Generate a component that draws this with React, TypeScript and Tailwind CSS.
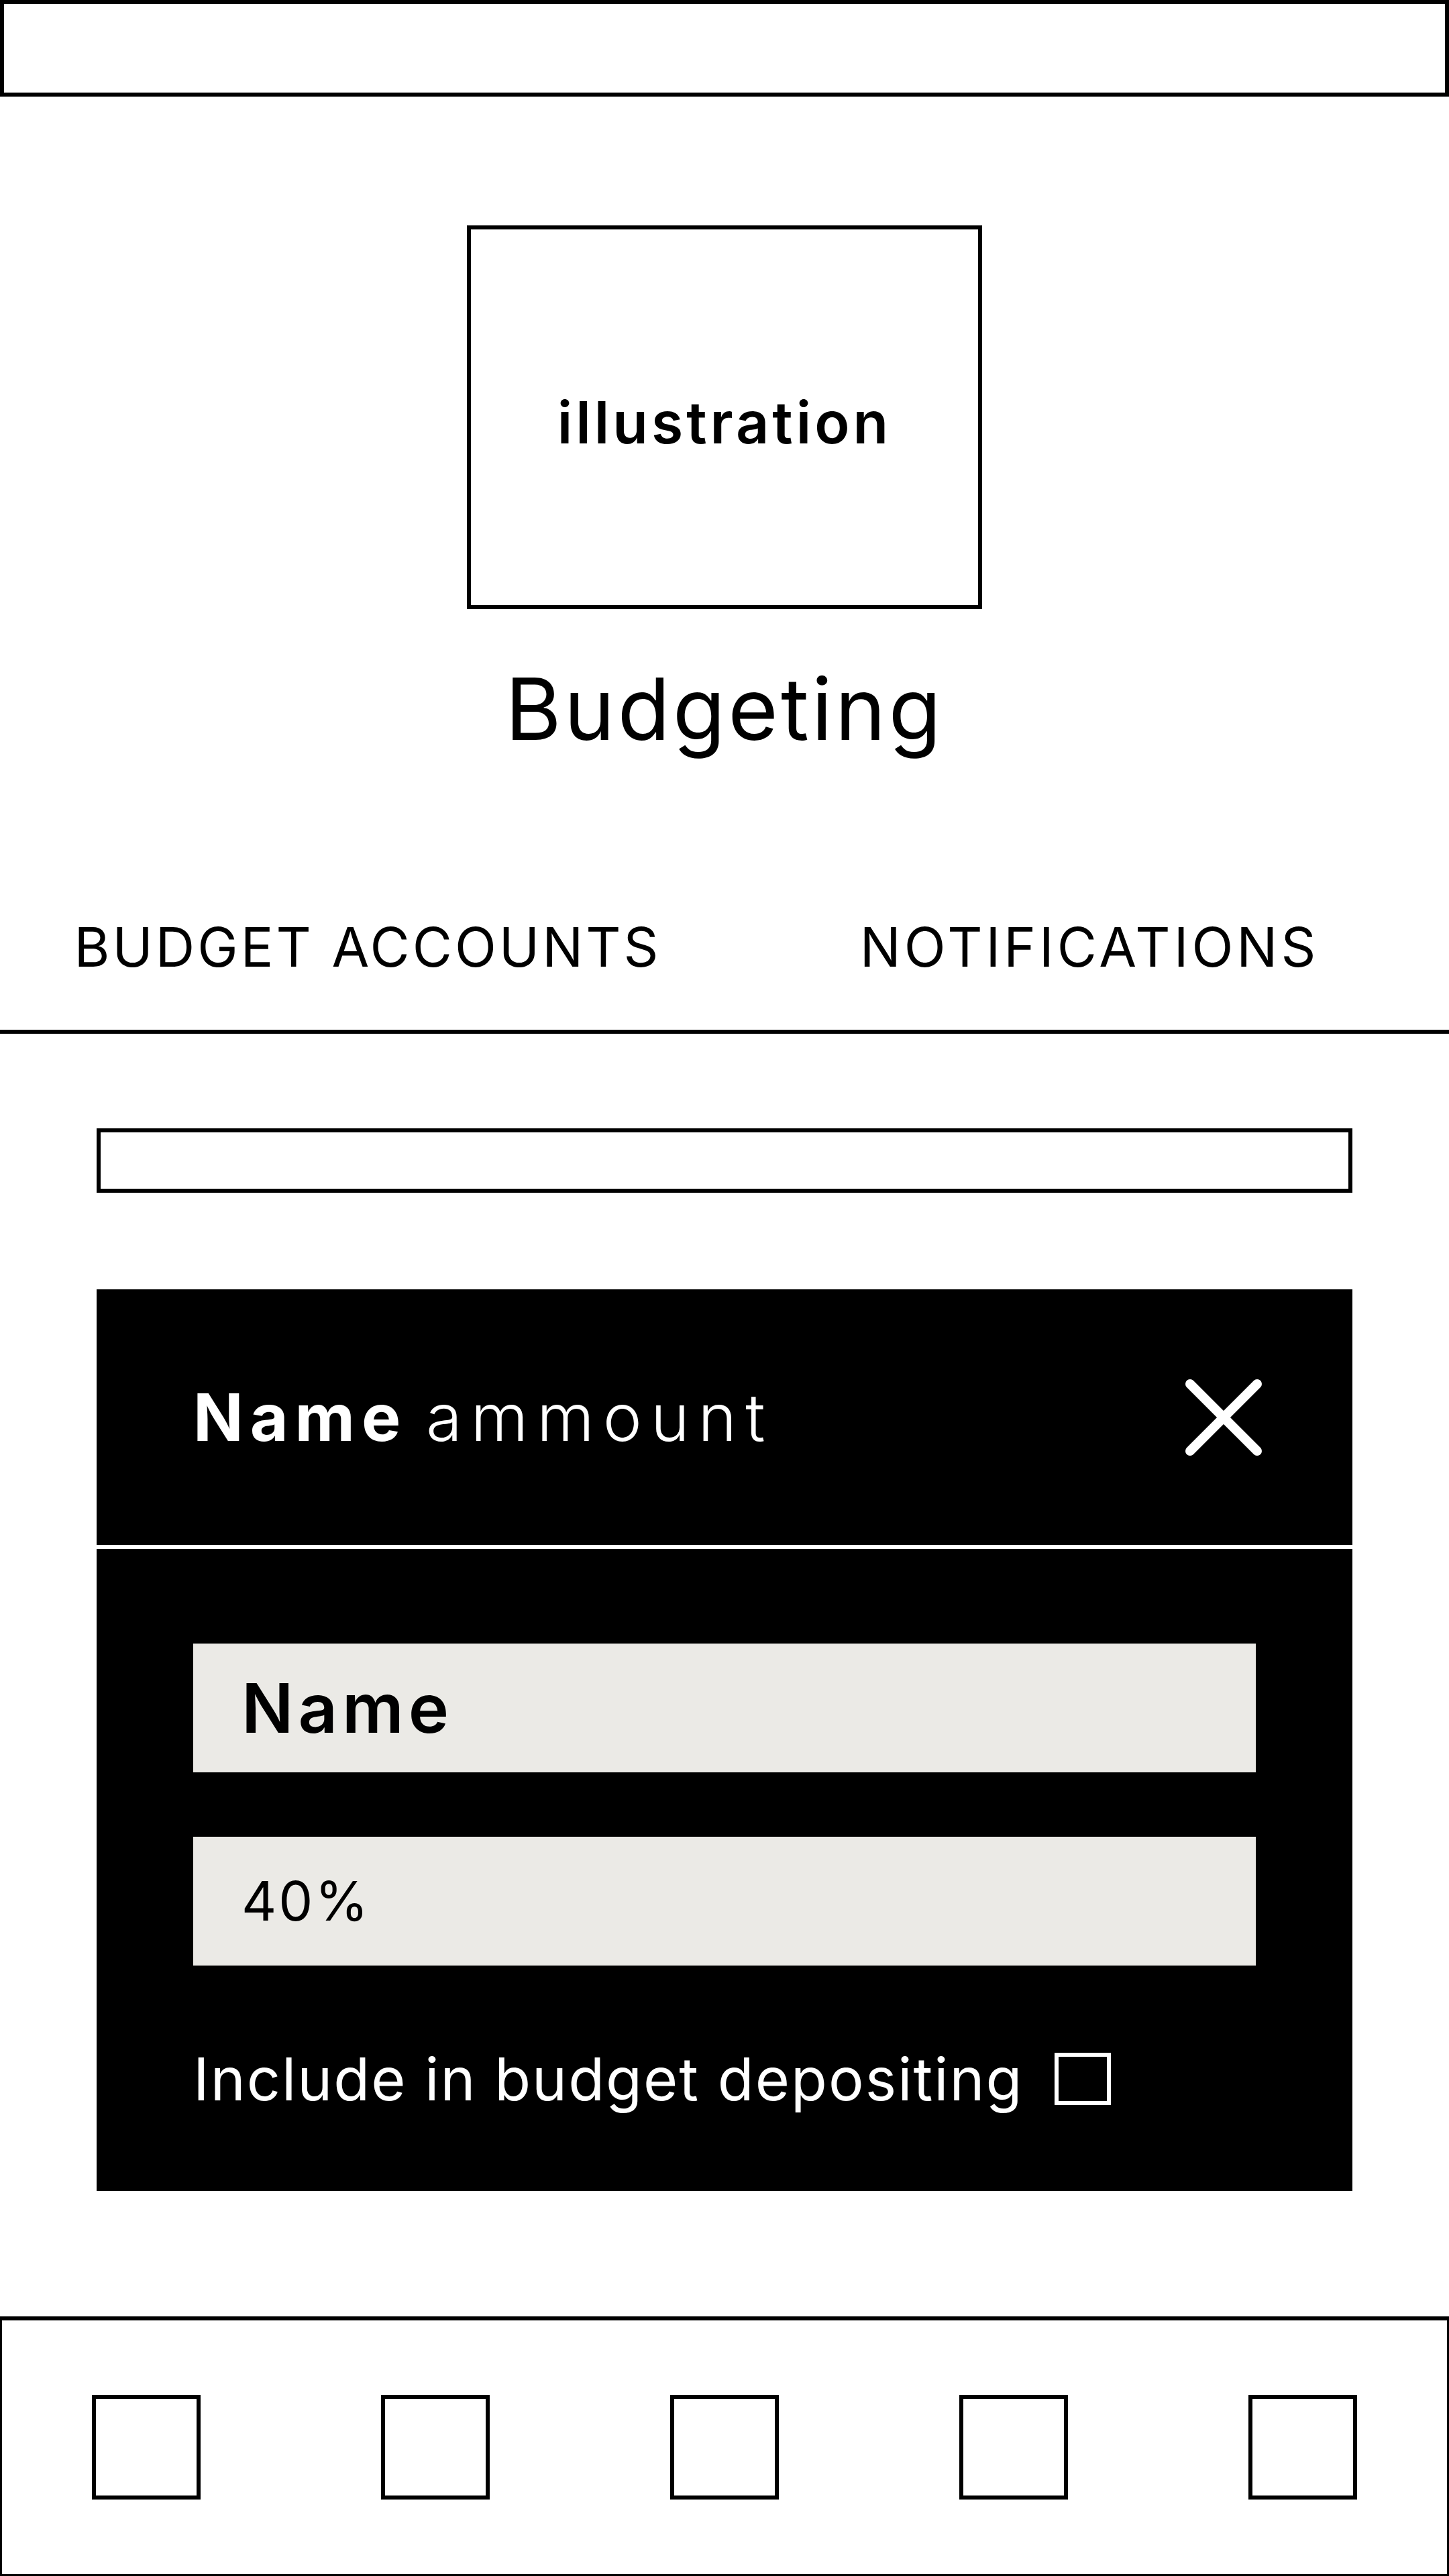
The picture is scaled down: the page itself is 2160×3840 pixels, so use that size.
import * as React from "react"

function CloseIcon() {
  return (
    <svg width="114" height="114" viewBox="0 0 114 114" fill="none" stroke="white" strokeWidth="14" strokeLinecap="round">
      <line x1="7" y1="7" x2="107" y2="107" />
      <line x1="107" y1="7" x2="7" y2="107" />
    </svg>
  )
}

export default function App() {
  return (
    <div className="flex min-h-screen w-[2160px] flex-col bg-white font-['Inter','Liberation_Sans',sans-serif] text-black">
      {/* top bar */}
      <header className="h-[144px] shrink-0 border-[6px] border-black" />

      {/* illustration + title */}
      <section className="flex flex-col items-center pt-[192px]">
        <div className="flex h-[572px] w-[768px] items-center justify-center border-[6px] border-black">
          <span className="pt-[16px] text-[86px] font-semibold leading-none tracking-[5px]">illustration</span>
        </div>
        <h1 className="mt-[85px] text-[128px] font-normal leading-none tracking-[4px]">Budgeting</h1>
      </section>

      {/* tabs */}
      <nav className="mt-[251px] grid grid-cols-2 border-b-[6px] border-black pb-[82px]">
        <div className="pl-[16px] text-center text-[81px] leading-none tracking-[4px]">BUDGET ACCOUNTS</div>
        <div className="pl-[8px] text-center text-[81px] leading-none tracking-[5px]">NOTIFICATIONS</div>
      </nav>

      {/* search */}
      <div className="mx-[144px] mt-[141px] h-[96px] border-[6px] border-black" />

      {/* edit card */}
      <div className="mx-[144px] mt-[144px] bg-black text-white">
        <div className="flex h-[387px] items-center justify-between border-b-[6px] border-white pl-[144px] pr-[135px]">
          <div className="text-[98px] leading-none">
            <span className="font-bold tracking-[10px]">Name</span>{" "}
            <span className="font-light tracking-[13px]">ammount</span>
          </div>
          <CloseIcon />
        </div>
        <div className="flex flex-col px-[144px] pt-[141px] pb-[123px]">
          <div className="flex h-[192px] items-center bg-[#ebeae6] pl-[72px] text-[102px] font-semibold leading-none tracking-[7px] text-black">
            Name
          </div>
          <div className="mt-[96px] flex h-[192px] items-center bg-[#ebeae6] pl-[72px] text-[81px] leading-none tracking-[3px] text-black">
            40%
          </div>
          <label className="mt-[125px] flex h-[88px] items-center">
            <span className="text-[88px] leading-none tracking-[2px]">Include in budget depositing</span>
            <span className="ml-[46px] h-[78px] w-[84px] border-[6px] border-white" />
          </label>
        </div>
      </div>

      {/* bottom nav */}
      <footer className="mt-auto flex h-[387px] shrink-0 items-center justify-around border-x-[3px] border-t-[6px] border-b-[3px] border-black">
        {[0, 1, 2, 3, 4].map((i) => (
          <div key={i} className="h-[156px] w-[162px] border-[6px] border-black" />
        ))}
      </footer>
    </div>
  )
}
